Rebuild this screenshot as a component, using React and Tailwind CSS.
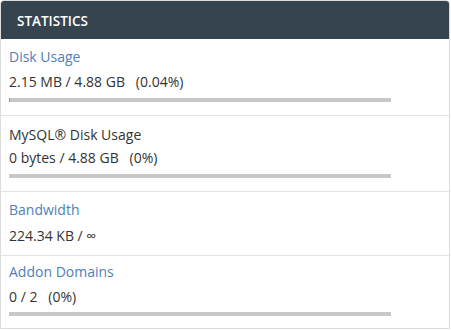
import React from "react";

function Bar({ green }) {
  return (
    <div className="relative h-[4px] w-[382px] bg-[#c8c8c8]">
      {green && <div className="absolute left-0 top-0 h-full w-[1px] bg-[#5cb85c]" />}
    </div>
  );
}

export default function App() {
  return (
    <div
      className="w-[451px] h-[330px] bg-white"
      style={{ fontFamily: '"Open Sans", "Liberation Sans", sans-serif' }}
    >
      <div className="w-[450px] h-[329px] border border-[#dcdcdc] rounded-t-[4px] flex flex-col overflow-hidden">
        <div className="h-[39px] shrink-0 bg-[#36444f] flex items-center pl-[17px] pt-[2px] text-white text-[13.5px] font-semibold leading-[20px] -mt-[1px] mx-[-1px]">
          STATISTICS
        </div>
        <div className="pl-[8px] pt-[8px] pb-[13px] border-b border-[#e2e2e2] text-[14px] leading-[20px] text-[#333]">
          <div className="text-[#5180b6]">Disk Usage</div>
          <div className="mt-[5px] whitespace-pre">2.15 MB / 4.88 GB   (0.04%)</div>
          <div className="mt-[6px]"><Bar green /></div>
        </div>
        <div className="pl-[8px] pt-[9px] pb-[13px] border-b border-[#e2e2e2] text-[14px] leading-[20px] text-[#333]">
          <div>MySQL® Disk Usage</div>
          <div className="mt-[3px] whitespace-pre">0 bytes / 4.88 GB   (0%)</div>
          <div className="mt-[6px]"><Bar /></div>
        </div>
        <div className="pl-[8px] pt-[8px] pb-[9px] border-b border-[#e2e2e2] text-[14px] leading-[20px] text-[#333]">
          <div className="text-[#5180b6]">Bandwidth</div>
          <div className="mt-[6px] whitespace-pre">224.34 KB / ∞</div>
        </div>
        <div className="pl-[8px] pt-[6px] text-[14px] leading-[20px] text-[#333]">
          <div className="text-[#5180b6]">Addon Domains</div>
          <div className="mt-[5px] whitespace-pre">0 / 2   (0%)</div>
          <div className="mt-[5px]"><Bar /></div>
        </div>
      </div>
    </div>
  );
}
